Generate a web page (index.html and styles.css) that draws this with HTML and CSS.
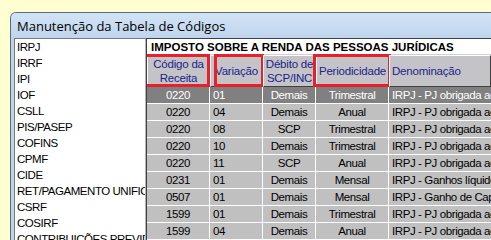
FILE: index.html
```html
<!DOCTYPE html>
<html lang="pt">
<head>
<meta charset="utf-8">
<title>Manutenção da Tabela de Códigos</title>
<link rel="stylesheet" href="styles.css">
</head>
<body>
<div class="window">
  <div class="titlebar">Manutenção da Tabela de Códigos</div>
  <div class="client">
    <ul class="listbox">
      <li>IRPJ</li>
      <li>IRRF</li>
      <li>IPI</li>
      <li>IOF</li>
      <li>CSLL</li>
      <li>PIS/PASEP</li>
      <li>COFINS</li>
      <li>CPMF</li>
      <li>CIDE</li>
      <li>RET/PAGAMENTO UNIFICADO</li>
      <li>CSRF</li>
      <li>COSIRF</li>
      <li>CONTRIBUIÇÕES PREVIDENCIÁRIAS</li>
    </ul>
    <div class="grid">
      <div class="grid-title">IMPOSTO SOBRE A RENDA DAS PESSOAS JURÍDICAS</div>
      <div class="row head">
        <div class="hc marked m-codigo">Código da Receita</div>
        <div class="hc marked m-variacao">Variação</div>
        <div class="hc">Débito de SCP/INC</div>
        <div class="hc marked m-period">Periodicidade</div>
        <div class="hc left">Denominação</div>
      </div>
      <div class="row data selected">
        <div class="c center">0220</div><div class="c">01</div><div class="c center">Demais</div><div class="c center">Trimestral</div><div class="c">IRPJ - PJ obrigada ao lucro real</div>
      </div>
      <div class="row data">
        <div class="c center">0220</div><div class="c">04</div><div class="c center">Demais</div><div class="c center">Anual</div><div class="c">IRPJ - PJ obrigada ao lucro real</div>
      </div>
      <div class="row data">
        <div class="c center">0220</div><div class="c">08</div><div class="c center">SCP</div><div class="c center">Trimestral</div><div class="c">IRPJ - PJ obrigada ao lucro real</div>
      </div>
      <div class="row data">
        <div class="c center">0220</div><div class="c">10</div><div class="c center">Demais</div><div class="c center">Trimestral</div><div class="c">IRPJ - PJ obrigada ao lucro real</div>
      </div>
      <div class="row data">
        <div class="c center">0220</div><div class="c">11</div><div class="c center">SCP</div><div class="c center">Anual</div><div class="c">IRPJ - PJ obrigada ao lucro real</div>
      </div>
      <div class="row data">
        <div class="c center">0231</div><div class="c">01</div><div class="c center">Demais</div><div class="c center">Mensal</div><div class="c">IRPJ - Ganhos líquidos</div>
      </div>
      <div class="row data">
        <div class="c center">0507</div><div class="c">01</div><div class="c center">Demais</div><div class="c center">Mensal</div><div class="c">IRPJ - Ganho de Capital</div>
      </div>
      <div class="row data">
        <div class="c center">1599</div><div class="c">01</div><div class="c center">Demais</div><div class="c center">Trimestral</div><div class="c">IRPJ - PJ obrigada ao lucro real</div>
      </div>
      <div class="row data">
        <div class="c center">1599</div><div class="c">04</div><div class="c center">Demais</div><div class="c center">Anual</div><div class="c">IRPJ - PJ obrigada ao lucro real</div>
      </div>
    </div>
  </div>
</div>
</body>
</html>
```
FILE: styles.css
```css
html, body {
  margin: 0;
  padding: 0;
}
body {
  width: 491px;
  height: 240px;
  overflow: hidden;
  background: #ffffd2;
}
.window {
  margin: 12px 0 0 10px;
  height: 228px;
  border: 1px solid #5d6a78;
  border-right: none;
  border-bottom: none;
  border-top-left-radius: 6px;
  background: #bed4ec;
  padding-left: 3px;
  overflow: hidden;
}
.titlebar {
  height: 25px;
  line-height: 26px;
  font-family: "Open Sans", "Noto Sans", sans-serif;
  font-size: 13px;
  color: #000;
  background: linear-gradient(#d3e3f5, #bfd5ed);
  margin-left: -3px;
  padding-left: 6px;
  white-space: nowrap;
}
.client {
  display: flex;
  align-items: flex-start;
  background: #f0f0f0;
  height: 203px;
  overflow: hidden;
}
.listbox {
  list-style: none;
  margin: 0;
  padding: 0 0 0 2px;
  width: 128px;
  height: 210px;
  background: #fff;
  border: 1px solid #7a7a7a;
  border-right-color: #b5b5b5;
  border-bottom: none;
  overflow: hidden;
  font-family: "Liberation Sans", Arial, sans-serif;
  font-size: 11.5px;
  letter-spacing: -0.45px;
  color: #000;
}
.listbox li {
  height: 16px;
  line-height: 16px;
  white-space: nowrap;
  overflow: hidden;
}
.grid {
  flex: 1;
  height: 210px;
  border-left: 1px solid #404040;
  border-top: 1px solid #404040;
  background: #fff;
  font-family: "Liberation Sans", Arial, sans-serif;
  font-size: 11.5px;
  letter-spacing: -0.4px;
  overflow: hidden;
}
.grid-title {
  height: 15px;
  line-height: 16px;
  padding-left: 4px;
  font-weight: bold;
  font-size: 11.5px;
  letter-spacing: 0;
  white-space: nowrap;
  background: #fff;
  border-bottom: 1px solid #d0d0d0;
}
.row {
  display: grid;
  grid-template-columns: 62px 52px 52px 72px 1fr;
  column-gap: 1px;
  margin-bottom: 1px;
}
.row.head {
  background: #404040;
  height: 32px;
  margin-bottom: 0;
  column-gap: 0;
  grid-template-columns: 63px 53px 53px 73px 1fr;
}
.hc {
  position: relative;
  display: flex;
  align-items: center;
  justify-content: center;
  text-align: center;
  background: #c4c4c8;
  color: #22228a;
  line-height: 14px;
  border-top: 1px solid #fff;
  border-left: 1px solid #fff;
  border-right: 1px solid #404040;
  border-bottom: 1px solid #404040;
  padding: 0 1px;
  letter-spacing: -0.2px;
}
.hc.left {
  justify-content: flex-start;
  padding-left: 2px;
}
.marked::after {
  content: "";
  position: absolute;
  top: -2px;
  bottom: -1px;
  border: 3px solid #e8202a;
}
.m-codigo::after { left: -4px; right: -1px; }
.m-variacao::after { left: 3px; right: -2px; }
.m-period::after { left: -4px; right: -3px; }
.row.data {
  height: 16px;
  line-height: 17px;
  background: #fff;
}
.c {
  background: #c0c0c0;
  color: #000;
  padding-left: 3px;
  white-space: nowrap;
  overflow: hidden;
}
.c.center {
  text-align: center;
  padding-left: 0;
}
.selected .c {
  background: #808080;
  color: #fff;
}
```
